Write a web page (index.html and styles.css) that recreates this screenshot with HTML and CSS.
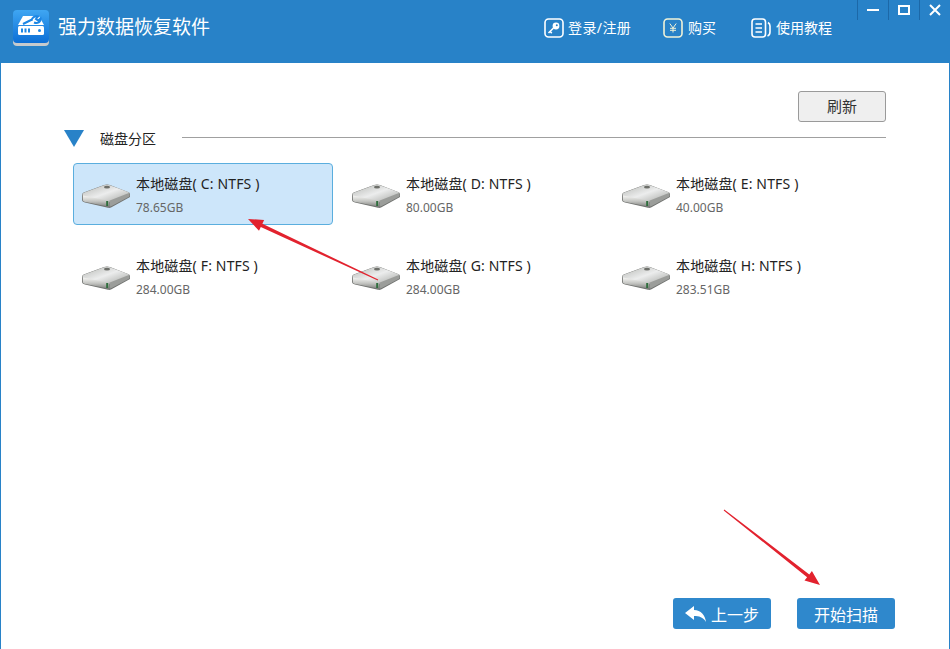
FILE: index.html
```html
<!DOCTYPE html>
<html lang="zh-CN">
<head>
    <meta charset="UTF-8">
    <title>强力数据恢复软件</title>
    <link rel="stylesheet" href="styles.css">
</head>
<body>
    <svg class="defs" width="0" height="0">
        <defs>
            <linearGradient id="driveTop" x1="0" y1="0" x2="1" y2="1">
                <stop offset="0" stop-color="#b4b6b2"/>
                <stop offset="0.5" stop-color="#eceded"/>
                <stop offset="1" stop-color="#a3a5a1"/>
            </linearGradient>
            <linearGradient id="driveFront" x1="0" y1="0" x2="0" y2="1">
                <stop offset="0" stop-color="#f6f6f4"/>
                <stop offset="0.5" stop-color="#c4c5c2"/>
                <stop offset="1" stop-color="#7c7e7b"/>
            </linearGradient>
            <linearGradient id="logoBlue" x1="0" y1="0" x2="0" y2="1">
                <stop offset="0" stop-color="#3fa6f2"/>
                <stop offset="1" stop-color="#0c6fd6"/>
            </linearGradient>
            <symbol id="drive" viewBox="0 0 48 24">
                <path d="M0 11 C0 9.500 1 8.500 3 8 L22 1 C24 .3 26 .3 28 1 L46 8 C47.500 8.600 48 9.500 48 10.500 V13 L29 23.500 C28 24 27 24 26 23.800 L3 18.500 C1 18 0 17 0 15.500 Z" fill="#6f716e"/>
                <path d="M.5 10.500 C.5 9.500 1.500 8.700 3 8.200 L22 1.200 C24 .5 26 .5 28 1.200 L46 8 C47.800 8.800 47.800 9.800 46 10.700 L29 17.500 C28 17.900 27 18 26 17.800 L3 13 C1.500 12.600 .5 11.800 .5 10.500 Z" fill="url(#driveTop)"/>
                <path d="M.8 11.500 L26.500 16.500 L28 23 L3.500 18 C1.800 17.600 .8 16.800 .8 15.400 Z" fill="url(#driveFront)"/>
                <path d="M28.300 22.800 L27.200 16.800 L47.500 8.800 V12.600 Z" fill="#9b9d9a"/>
                <ellipse cx="25" cy="3.200" rx="3" ry="1.400" fill="#6d6f6a"/>
                <rect x="24.200" y="17" width="2" height="5" fill="#2f6e3c"/>
            </symbol>
        </defs>
    </svg>

    <div class="window">
        <header class="topbar">
            <svg class="logo" width="36" height="36" viewBox="0 0 36 36">
                <path d="M0 28 H36 V32 C36 34.500 34.500 36 32 36 H4 C1.500 36 0 34.500 0 32 Z" fill="#c6cacd"/>
                <rect width="36" height="33" rx="4" fill="url(#logoBlue)"/>
                <path d="M5 15 L10 6 H26 L31 15 Z" fill="#fff"/>
                <rect x="5" y="16" width="26" height="9" rx="1.500" fill="#fff"/>
                <path d="M10 14 L19 9.500 M18.500 11 C18.500 7.500 22 5.500 25 6.500 L23 9 L25 10.500 L27.500 8.500 C28 12 24.500 14 21 12.500" stroke="#1c86e4" stroke-width="2" fill="none"/>
                <rect x="8" y="18.500" width="2" height="4" fill="#1c86e4"/>
                <rect x="11.500" y="18.500" width="2" height="4" fill="#1c86e4"/>
                <rect x="15" y="18.500" width="2" height="4" fill="#1c86e4"/>
                <circle cx="26.500" cy="20.500" r="1.500" fill="#1c86e4"/>
            </svg>
            <span class="app-title">强力数据恢复软件</span>

            <nav class="topnav">
                <a class="nav-login">
                    <svg width="20" height="20" viewBox="0 0 20 20">
                        <rect x="1" y="1" width="18" height="18" rx="3.500" fill="none" stroke="#fff" stroke-width="1.600"/>
                        <circle cx="12" cy="8" r="3.400" fill="#fff"/>
                        <circle cx="12.800" cy="7.200" r="1" fill="#2882c8"/>
                        <path d="M9.500 10 L4.500 15 M6 13.500 L7.800 15.200" stroke="#fff" stroke-width="1.600" fill="none"/>
                    </svg>
                    <span class="login-text">登录/注册</span>
                </a>
                <a class="nav-buy">
                    <svg width="20" height="20" viewBox="0 0 20 20">
                        <rect x="1" y="1" width="18" height="18" rx="3.500" fill="none" stroke="#f1f3d8" stroke-width="1.600"/>
                        <path d="M6.800 5.500 L10 10 L13.200 5.500 M10 10 V14.500 M7 10.300 H13 M7 12.300 H13" fill="none" stroke="#f1f3d8" stroke-width="1"/>
                    </svg>
                    购买
                </a>
                <a class="nav-help">
                    <svg width="20" height="20" viewBox="0 0 20 20">
                        <rect x="1" y="1" width="13.500" height="18" rx="3" fill="none" stroke="#fff" stroke-width="1.600"/>
                        <path d="M4.500 6 H11 M4.500 10 H11 M4.500 14 H11" stroke="#fff" stroke-width="1.300"/>
                        <path d="M17 4.500 C18.500 5.500 19 6.500 19 8 V14 C19 16 18 17.500 16.500 18" fill="none" stroke="#fff" stroke-width="1.600"/>
                    </svg>
                    使用教程
                </a>
            </nav>

            <div class="winctl">
                <span class="winbtn"><i class="ico-min"></i></span>
                <span class="winbtn"><i class="ico-max"></i></span>
                <span class="winbtn">
                    <svg width="12" height="12" viewBox="0 0 12 12"><path d="M1 1 L11 11 M11 1 L1 11" stroke="#fff" stroke-width="2"/></svg>
                </span>
            </div>
        </header>

        <main class="content">
            <div class="refresh-row">
                <button class="btn-refresh">刷新</button>
            </div>

            <div class="section-head">
                <span class="triangle"></span>
                <span class="section-label">磁盘分区</span>
                <span class="section-line"></span>
            </div>

            <div class="disk-grid">
                <div class="disk selected">
                    <svg class="disk-icon"><use href="#drive"/></svg>
                    <div><div class="disk-name">本地磁盘( C: NTFS )</div><div class="disk-size">78.65GB</div></div>
                </div>
                <div class="disk">
                    <svg class="disk-icon"><use href="#drive"/></svg>
                    <div><div class="disk-name">本地磁盘( D: NTFS )</div><div class="disk-size">80.00GB</div></div>
                </div>
                <div class="disk">
                    <svg class="disk-icon"><use href="#drive"/></svg>
                    <div><div class="disk-name">本地磁盘( E: NTFS )</div><div class="disk-size">40.00GB</div></div>
                </div>
                <div class="disk">
                    <svg class="disk-icon"><use href="#drive"/></svg>
                    <div><div class="disk-name">本地磁盘( F: NTFS )</div><div class="disk-size">284.00GB</div></div>
                </div>
                <div class="disk">
                    <svg class="disk-icon"><use href="#drive"/></svg>
                    <div><div class="disk-name">本地磁盘( G: NTFS )</div><div class="disk-size">284.00GB</div></div>
                </div>
                <div class="disk">
                    <svg class="disk-icon"><use href="#drive"/></svg>
                    <div><div class="disk-name">本地磁盘( H: NTFS )</div><div class="disk-size">283.51GB</div></div>
                </div>
            </div>

            <div class="actions">
                <button class="btn-blue">
                    <svg width="21" height="16" viewBox="0 0 21 16"><path d="M0 7 L9 0 V4 C16 4 20 9 21 16 C18 11 14 10 9 10 V14 Z" fill="#fff"/></svg>
                    上一步
                </button>
                <button class="btn-blue">开始扫描</button>
            </div>
        </main>

        <!-- red arrows drawn on top of the screenshot -->
        <svg class="arrows" width="950" height="649" viewBox="0 0 950 649">
            <polygon points="378.200,279.500 262.400,223.800 264.100,220 248,219 259,230.800 260.800,227 377.800,280.500" fill="#e2222e"/>
            <polygon points="724.300,509.600 809.300,574.400 811.900,571.100 820,585 804.500,580.500 807.100,577.200 723.700,510.400" fill="#e2222e"/>
        </svg>
    </div>
</body>
</html>
```

FILE: styles.css
```css
* {
    box-sizing: border-box;
}
body {
    margin: 0;
    font-family: "Noto Sans", "Noto Sans CJK SC", sans-serif;
    color: #222;
    background: #fff;
}
.defs {
    position: absolute;
}
.window {
    position: relative;
    width: 950px;
    height: 649px;
    display: flex;
    flex-direction: column;
    overflow: hidden;
}

/* top bar */
.topbar {
    display: flex;
    height: 63px;
    flex-shrink: 0;
    padding-left: 13px;
    background: #2882c8;
    color: #fff;
}
.logo {
    margin-top: 10px;
}
.app-title {
    margin: 13px 0 0 9px;
    font-size: 19px;
    line-height: 28px;
}
.topnav {
    display: flex;
    margin-left: auto;
    padding-top: 18px;
    font-size: 14px;
}
.topnav a {
    display: flex;
    height: 20px;
    align-items: center;
    gap: 4px;
    line-height: 20px;
}
.login-text {
    letter-spacing: .4px;
}
.nav-login {
    width: 119px;
}
.nav-buy {
    width: 88px;
}
.nav-buy svg {
    margin-right: 1px;
}
.nav-help {
    gap: 5px !important;
}
.winctl {
    display: flex;
    align-items: flex-start;
    margin-left: 25px;
}
.winbtn {
    display: flex;
    width: 31px;
    height: 20px;
    align-items: center;
    justify-content: center;
    border-left: 1px solid #1c68a8;
}
.ico-min {
    display: block;
    width: 12px;
    height: 2px;
    background: #fff;
}
.ico-max {
    display: block;
    width: 12px;
    height: 10px;
    border: 2px solid #fff;
}

/* main area */
.content {
    flex: 1;
    display: flex;
    flex-direction: column;
    padding: 28px 63px 20px 63px;
    border-left: 1px solid #2882c8;
    border-right: 1px solid #2882c8;
}
.refresh-row {
    display: flex;
    justify-content: flex-end;
}
.btn-refresh {
    width: 88px;
    height: 31px;
    padding: 0 0 2px;
    border: 1px solid #9a9a9a;
    border-radius: 3px;
    background: #efefef;
    color: #333;
    font: inherit;
    font-size: 15px;
}
.section-head {
    display: flex;
    align-items: center;
    height: 17px;
    margin-top: 8px;
}
.triangle {
    width: 0;
    height: 0;
    border-left: 10px solid transparent;
    border-right: 10px solid transparent;
    border-top: 17px solid #2882c8;
}
.section-label {
    margin-left: 16px;
    font-size: 14px;
    line-height: 17px;
}
.section-line {
    flex: 1;
    height: 1px;
    margin: 0 0 2px 26px;
    background: #a0a0a0;
}

/* disk list */
.disk-grid {
    display: grid;
    grid-template-columns: repeat(3, 260px);
    grid-auto-rows: 62px;
    column-gap: 10px;
    row-gap: 20px;
    margin: 16px 0 0 9px;
}
.disk {
    display: flex;
    align-items: flex-start;
    border: 1px solid transparent;
    border-radius: 4px;
    padding: 8px 0 0 8px;
}
.disk.selected {
    border-color: #5aaede;
    background: #cde6fa;
}
.disk-icon {
    width: 48px;
    height: 24px;
    margin: 12px 6px 0 0;
    flex-shrink: 0;
}
.disk-name {
    font-size: 14px;
    line-height: 24px;
    letter-spacing: .15px;
    color: #222;
}
.disk-size {
    font-size: 12px;
    line-height: 24px;
    color: #666;
}

/* bottom buttons */
.actions {
    display: flex;
    justify-content: flex-end;
    gap: 26px;
    margin: auto -9px 0 0;
}
.btn-blue {
    display: flex;
    width: 98px;
    height: 31px;
    padding: 0;
    align-items: center;
    justify-content: center;
    gap: 5px;
    border: none;
    border-radius: 3px;
    background: #2f88cc;
    color: #fff;
    font: inherit;
    font-size: 16px;
}

.arrows {
    position: absolute;
    left: 0;
    top: 0;
    pointer-events: none;
}
```
